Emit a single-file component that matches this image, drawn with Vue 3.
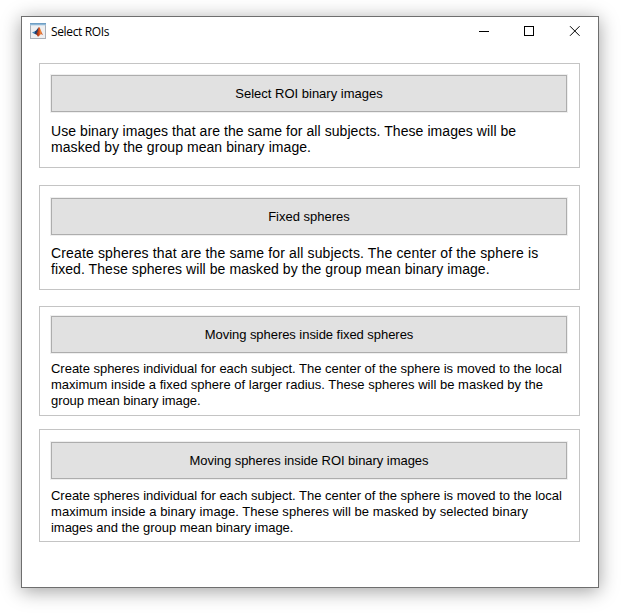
<script setup>
const options = [
  {
    id: 'images',
    label: 'Select ROI binary images',
    lines: [
      'Use binary images that are the same for all subjects. These images will be',
      'masked by the group mean binary image.',
    ],
  },
  {
    id: 'fixed',
    label: 'Fixed spheres',
    lines: [
      'Create spheres that are the same for all subjects. The center of the sphere is',
      'fixed. These spheres will be masked by the group mean binary image.',
    ],
  },
  {
    id: 'moving',
    label: 'Moving spheres inside fixed spheres',
    lines: [
      'Create spheres individual for each subject. The center of the sphere is moved to the local',
      'maximum inside a fixed sphere of larger radius. These spheres will be masked by the',
      'group mean binary image.',
    ],
  },
  {
    id: 'moving-images',
    label: 'Moving spheres inside ROI binary images',
    lines: [
      'Create spheres individual for each subject. The center of the sphere is moved to the local',
      'maximum inside a binary image. These spheres will be masked by selected binary',
      'images and the group mean binary image.',
    ],
  },
]
</script>

<template>
  <div class="desktop">
    <main class="window">
      <header class="titlebar">
        <svg class="app-icon" width="16" height="16" viewBox="0 0 16 16">
          <defs>
            <linearGradient id="bar" x1="0" y1="0" x2="0" y2="1">
              <stop offset="0" stop-color="#5f93bd" />
              <stop offset="1" stop-color="#a9cbe4" />
            </linearGradient>
            <linearGradient id="peak" x1="0" y1="0" x2="1" y2="0">
              <stop offset="0" stop-color="#7c1f12" />
              <stop offset="0.45" stop-color="#d9501c" />
              <stop offset="0.6" stop-color="#f08a3c" />
              <stop offset="1" stop-color="#b93016" />
            </linearGradient>
          </defs>
          <rect x="0.5" y="0.5" width="15" height="15" fill="#eeeff1" stroke="#a9aeb6" />
          <rect x="0" y="0" width="16" height="2.4" fill="url(#bar)" />
          <path d="M2 9.4 5 8.2 6.6 9.6 4.7 11Z" fill="#3f86bb" />
          <path d="M5 8.2C6.6 7.8 7.3 5.6 8.9 4.3L8.2 8.6 6.4 11.6 4.7 11Z" fill="#233d69" />
          <path d="M8.9 4C10.4 4.4 11.2 9.3 13.2 12.3 11.8 11 10.8 10.8 9.9 12 9.2 13 8.4 13.6 7.7 13.6 7.5 12.5 6.8 11.7 6 11.4 7.6 9.6 8 6 8.9 4Z" fill="url(#peak)" />
        </svg>
        <h1 class="title">Select ROIs</h1>
        <svg class="controls" width="102" height="11" viewBox="0 0 102 11" fill="none" stroke="#000">
          <path d="M0 5.5H10" />
          <rect x="45.5" y="0.5" width="9" height="9" />
          <path d="M91 0.2 100.6 9.8M100.6 0.2 91 9.8" stroke-width="1" />
        </svg>
      </header>
      <section v-for="o in options" :key="o.id" class="panel" :class="o.id">
        <button class="action" type="button"><span class="label">{{ o.label }}</span></button>
        <p class="description">
          <span v-for="line in o.lines" :key="line" class="line">{{ line }}</span>
        </p>
      </section>
    </main>
  </div>
</template>

<style>
body { margin: 0; background: #fff; }
</style>

<style scoped>
.desktop {
  box-sizing: border-box;
  width: 627px;
  height: 614px;
  padding: 16px 28px 26px 21px;
  overflow: hidden;
  background: #fff;
  font-family: "Liberation Sans", Arial, sans-serif;
  color: #000;
}
.window {
  box-sizing: border-box;
  width: 578px;
  height: 572px;
  padding: 0 18px 0 17px;
  border: 1px solid #6e6e6e;
  background: #fff;
  box-shadow: 0 3px 18px rgba(0, 0, 0, 0.38);
}
.titlebar {
  display: flex;
  height: 46px;
  margin: 0 0 0 -9px;
}
.app-icon { flex: none; margin-top: 6px; }
.title {
  margin: 6px auto 0 5px;
  font: 12px/18px "Open Sans", "Noto Sans", sans-serif;
  letter-spacing: -0.35px;
}
.controls { flex: none; margin: 9px -1px 0 0; }
.panel {
  box-sizing: border-box;
  width: 541px;
  padding: 11px 11px 0;
  border: 1px solid #c4c4c4;
}
.images { height: 105px; margin-bottom: 17px; }
.fixed { height: 105px; margin-bottom: 16px; padding-top: 12px; }
.moving { height: 110px; margin-bottom: 13px; padding-top: 9px; }
.moving-images { height: 113px; padding-top: 12px; }
.action {
  display: flex;
  align-items: center;
  justify-content: center;
  box-sizing: border-box;
  width: 516px;
  height: 37px;
  margin: 0;
  padding: 0;
  border: 1px solid #adadad;
  background: #e1e1e1;
  box-shadow: 0 0 0 1px #efefef;
  font: 13px/16px "Liberation Sans", Arial, sans-serif;
  color: #000;
}
.label { white-space: nowrap; }
.moving .label { letter-spacing: -0.05px; }
.moving-images .label { letter-spacing: -0.04px; }
.description { margin: 11px 0 0; font-size: 14px; line-height: 16px; }
.fixed .description { margin-top: 10px; }
.moving .description { margin-top: 8px; font-size: 13px; }
.moving-images .description { margin-top: 9px; font-size: 13px; }
.line { display: block; white-space: nowrap; }
.images .line { letter-spacing: 0.065px; }
.fixed .line:nth-child(1) { letter-spacing: 0.145px; }
.fixed .line:nth-child(2) { letter-spacing: 0.07px; }
.moving .line:nth-child(1),
.moving-images .line:nth-child(1) { letter-spacing: -0.023px; }
.moving .line:nth-child(2) { letter-spacing: 0.018px; }
.moving .line:nth-child(3) { letter-spacing: -0.06px; }
.moving-images .line:nth-child(2) { letter-spacing: 0.05px; }
.moving-images .line:nth-child(3) { letter-spacing: -0.03px; }
</style>
